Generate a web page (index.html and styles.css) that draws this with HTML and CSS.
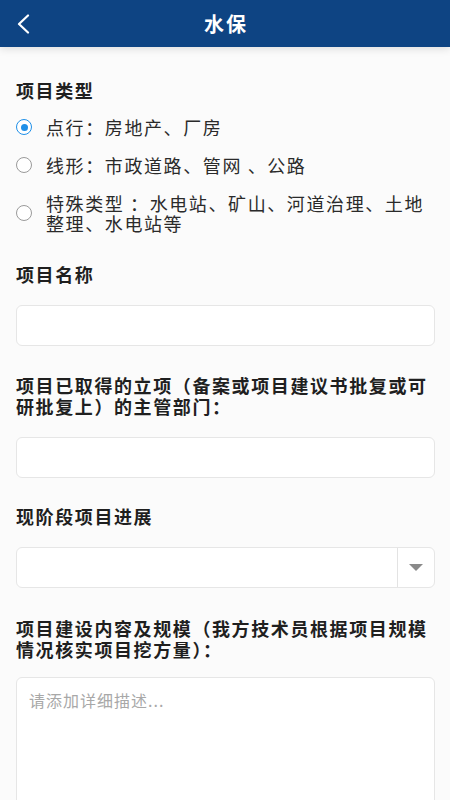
FILE: index.html
```html
<!DOCTYPE html>
<html lang="zh-CN">
<head>
<meta charset="utf-8">
<title>水保</title>
<link rel="stylesheet" href="styles.css">
</head>
<body>
<header class="topbar">
  <button class="back" aria-label="返回">
    <svg width="14" height="20" viewBox="0 0 14 20"><path d="M12 1.5 L3 10 L12 18.5" fill="none" stroke="#fff" stroke-width="2.2" stroke-linecap="round" stroke-linejoin="round"/></svg>
  </button>
  <h1 class="title">水保</h1>
</header>
<main class="form">
  <section class="field field-first">
    <div class="label">项目类型</div>
    <ul class="radios">
      <li class="radio checked"><span class="dot"></span><span class="rtext">点行：房地产、厂房</span></li>
      <li class="radio"><span class="dot"></span><span class="rtext">线形：市政道路、管网 、公路</span></li>
      <li class="radio"><span class="dot"></span><span class="rtext">特殊类型 ：水电站、矿山、河道治理、土地整理、水电站等</span></li>
    </ul>
  </section>
  <section class="field field-name">
    <div class="label">项目名称</div>
    <div class="input"></div>
  </section>
  <section class="field field-dept">
    <div class="label">项目已取得的立项（备案或项目建议书批复或可研批复上）的主管部门：</div>
    <div class="input"></div>
  </section>
  <section class="field field-stage">
    <div class="label">现阶段项目进展</div>
    <div class="select"><div class="select-value"></div><div class="select-arrow"><span class="tri"></span></div></div>
  </section>
  <section class="field field-scale">
    <div class="label">项目建设内容及规模（我方技术员根据项目规模情况核实项目挖方量）：</div>
    <div class="textarea"><span class="placeholder">请添加详细描述...</span></div>
  </section>
</main>
</body>
</html>
```
FILE: styles.css
```css
* { box-sizing: border-box; }
html, body { margin: 0; padding: 0; }
body {
  width: 450px;
  height: 800px;
  overflow: hidden;
  background: #fbfbfb;
  font-family: "Noto Sans CJK SC", "Noto Sans", sans-serif;
  color: #222;
}
.topbar {
  height: 47px;
  background: #0e4483;
  display: flex;
  align-items: center;
  justify-content: center;
  position: relative;
  box-shadow: 0 2px 8px rgba(0,0,0,0.12);
}
.back {
  position: absolute;
  left: 16px;
  top: 14px;
  width: 18px;
  height: 20px;
  padding: 0;
  border: 0;
  background: none;
  display: flex;
  align-items: center;
}
.title {
  margin: 0;
  color: #fff;
  font-size: 20px;
  font-weight: 700;
  letter-spacing: 2px;
  line-height: 47px;
  padding-left: 2px;
}
.form {
  padding: 0 15px 0 16px;
}
.field { display: flex; flex-direction: column; }
.field-first { margin-top: 33px; }
.field-name { margin-top: 31px; }
.field-dept { margin-top: 29px; }
.field-stage { margin-top: 28px; }
.field-scale { margin-top: 30px; }
.field-scale .label { margin-bottom: 17px; }
.label {
  font-size: 18px;
  font-weight: 700;
  letter-spacing: 1.6px;
  line-height: 21px;
  color: #1f1f1f;
  margin-bottom: 20px;
}
.field-first .label { margin-bottom: 16px; }
.radios {
  list-style: none;
  margin: 0;
  padding: 0;
  display: flex;
  flex-direction: column;
  gap: 18px;
}
.radio {
  display: flex;
  align-items: center;
  gap: 14px;
}
.dot {
  flex: none;
  width: 16px;
  height: 16px;
  border-radius: 50%;
  border: 1.5px solid #9a9a9a;
  background: #fff;
  display: flex;
  align-items: center;
  justify-content: center;
}
.radio.checked .dot { border-color: #1e8fe8; }
.radio.checked .dot::after {
  content: "";
  width: 7px;
  height: 7px;
  border-radius: 50%;
  background: #1e8fe8;
}
.rtext {
  font-size: 18px;
  letter-spacing: 1.6px;
  line-height: 20px;
  color: #2a2a2a;
}
.input {
  height: 41px;
  background: #fff;
  border: 1px solid #e6e6e6;
  border-radius: 6px;
}
.select {
  height: 41px;
  background: #fff;
  border: 1px solid #e6e6e6;
  border-radius: 6px;
  display: flex;
}
.select-value { flex: 1; }
.select-arrow {
  width: 37px;
  border-left: 1px solid #e3e3e3;
  display: flex;
  align-items: center;
  justify-content: center;
}
.tri {
  width: 0;
  height: 0;
  border-left: 7px solid transparent;
  border-right: 7px solid transparent;
  border-top: 7px solid #8a8a8a;
}
.textarea {
  height: 140px;
  background: #fff;
  border: 1px solid #e6e6e6;
  border-radius: 6px;
  padding: 10px 12px;
}
.placeholder {
  font-size: 16px;
  letter-spacing: 1px;
  line-height: 22px;
  color: #a8a8a8;
}
```
